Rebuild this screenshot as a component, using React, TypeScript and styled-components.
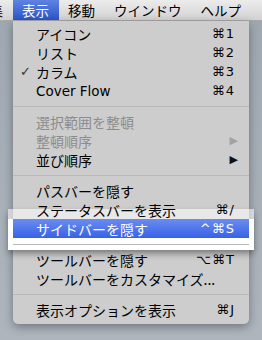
import { createGlobalStyle, styled } from "styled-components";

const GlobalStyle = createGlobalStyle`
    html, body {
        margin: 0;
        padding: 0;
    }
    body {
        font-family: "DejaVu Sans", "Noto Sans CJK JP", sans-serif;
    }
`;

const Screen = styled.div`
    width: 262px;
    height: 340px;
    overflow: hidden;
    background: linear-gradient(to bottom, #9ea7b0, #aeb5bd);
    position: relative;
`;

const MenuBar = styled.div`
    height: 21px;
    display: flex;
    align-items: stretch;
    background: linear-gradient(to bottom, #ececec, #d2d2d2);
    border-bottom: 1px solid #a9a9a9;
    box-sizing: border-box;
    white-space: nowrap;
    overflow: hidden;
`;

const MenuTitle = styled.div<{ $active?: boolean }>`
    display: flex;
    align-items: center;
    padding: 0 9.5px;
    font-family: "Noto Sans CJK JP", sans-serif;
    font-size: 13.5px;
    color: ${(p) => (p.$active ? "#fff" : "#000")};
    background: ${(p) => (p.$active ? "linear-gradient(to bottom, #5f83e2, #2c55c6)" : "none")};

    &:first-child {
        margin-left: -33.5px;
    }
`;

const Dropdown = styled.div`
    margin-left: 13px;
    width: 236px;
    background: #cdcdcd;
    border-radius: 0 0 5px 5px;
    box-shadow: 0 3px 10px rgba(0, 0, 0, 0.35);
    padding: 3px 0 5px;
    position: relative;
`;

const Item = styled.div<{ $disabled?: boolean; $active?: boolean; $raised?: boolean }>`
    height: 19px;
    display: flex;
    align-items: center;
    padding: 0 0 0 6px;
    font-size: 14px;
    color: ${(p) => (p.$active ? "#fff" : p.$disabled ? "#8c8c8c" : "#000")};
    background: ${(p) => (p.$active ? "linear-gradient(to bottom, #6a8cf0, #3862e6)" : "none")};
    position: ${(p) => (p.$raised ? "relative" : "static")};
    z-index: ${(p) => (p.$raised ? 2 : "auto")};
    white-space: nowrap;
`;

const Check = styled.span`
    width: 16px;
    padding-left: 1px;
    font-size: 13px;
    font-weight: bold;
    color: #333;
`;

const Label = styled.span`
    flex: 1;
    font-family: "Noto Sans CJK JP", sans-serif;
`;

const LatinLabel = styled.span`
    flex: 1;
    font-family: "DejaVu Sans", sans-serif;
    font-size: 13.5px;
`;

const Shortcut = styled.span`
    padding-right: 14px;
    font-family: "DejaVu Sans", "Noto Sans CJK JP", sans-serif;
    font-size: 13px;
    letter-spacing: 1px;
`;

const Arrow = styled.span<{ $disabled?: boolean }>`
    padding-right: 11px;
    font-size: 11px;
    color: ${(p) => (p.$disabled ? "#a2a2a2" : "#111")};
`;

const Separator = styled.div`
    height: 12px;
    display: flex;
    align-items: center;

    &::after {
        content: "";
        flex: 1;
        height: 1px;
        background: #b8b8b8;
    }
`;

const Callout = styled.div`
    margin: -10px -5px 0;
    padding: 10px 5px 0;
    position: relative;
    z-index: 1;
    background: linear-gradient(
        to bottom,
        rgba(255, 255, 255, 0.55) 0,
        rgba(255, 255, 255, 0.55) 10px,
        #ffffff 10px
    );
    box-shadow: 0 4px 7px -1px rgba(0, 0, 0, 0.45);
`;

export default function App() {
    return (
        <>
            <GlobalStyle />
            <Screen>
                <MenuBar>
                    <MenuTitle>編集</MenuTitle>
                    <MenuTitle $active>表示</MenuTitle>
                    <MenuTitle>移動</MenuTitle>
                    <MenuTitle>ウインドウ</MenuTitle>
                    <MenuTitle>ヘルプ</MenuTitle>
                </MenuBar>

                <Dropdown>
                    <Item>
                        <Check />
                        <Label>アイコン</Label>
                        <Shortcut>⌘1</Shortcut>
                    </Item>
                    <Item>
                        <Check />
                        <Label>リスト</Label>
                        <Shortcut>⌘2</Shortcut>
                    </Item>
                    <Item>
                        <Check>✓</Check>
                        <Label>カラム</Label>
                        <Shortcut>⌘3</Shortcut>
                    </Item>
                    <Item>
                        <Check />
                        <LatinLabel>Cover Flow</LatinLabel>
                        <Shortcut>⌘4</Shortcut>
                    </Item>
                    <Separator />
                    <Item $disabled>
                        <Check />
                        <Label>選択範囲を整頓</Label>
                    </Item>
                    <Item $disabled>
                        <Check />
                        <Label>整頓順序</Label>
                        <Arrow $disabled>▶</Arrow>
                    </Item>
                    <Item>
                        <Check />
                        <Label>並び順序</Label>
                        <Arrow>▶</Arrow>
                    </Item>
                    <Separator />
                    <Item>
                        <Check />
                        <Label>パスバーを隠す</Label>
                    </Item>
                    <Item $raised>
                        <Check />
                        <Label>ステータスバーを表示</Label>
                        <Shortcut>⌘/</Shortcut>
                    </Item>
                    <Callout>
                        <Item $active>
                            <Check />
                            <Label>サイドバーを隠す</Label>
                            <Shortcut>^⌘S</Shortcut>
                        </Item>
                        <Separator />
                    </Callout>
                    <Item>
                        <Check />
                        <Label>ツールバーを隠す</Label>
                        <Shortcut>⌥⌘T</Shortcut>
                    </Item>
                    <Item>
                        <Check />
                        <Label>ツールバーをカスタマイズ...</Label>
                    </Item>
                    <Separator />
                    <Item>
                        <Check />
                        <Label>表示オプションを表示</Label>
                        <Shortcut>⌘J</Shortcut>
                    </Item>
                </Dropdown>
            </Screen>
        </>
    );
}
